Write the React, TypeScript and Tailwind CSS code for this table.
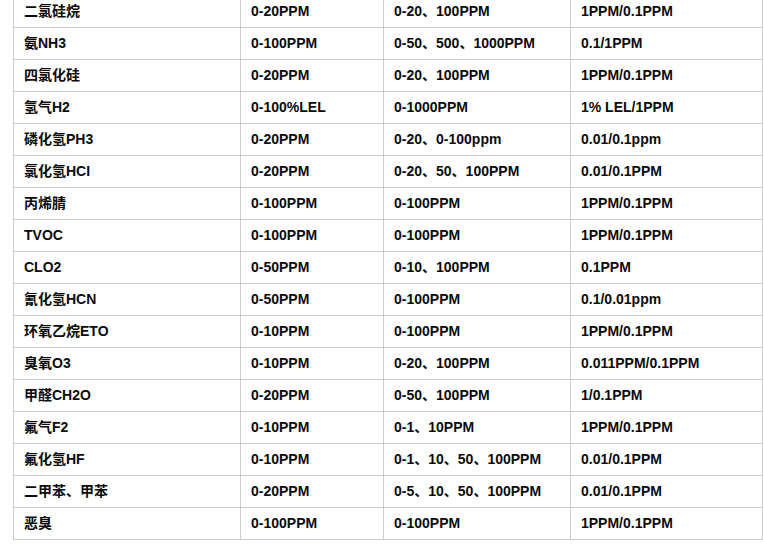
const ROWS: [string, string, string, string][] = [
  ["二氯硅烷", "0-20PPM", "0-20、100PPM", "1PPM/0.1PPM"],
  ["氨NH3", "0-100PPM", "0-50、500、1000PPM", "0.1/1PPM"],
  ["四氯化硅", "0-20PPM", "0-20、100PPM", "1PPM/0.1PPM"],
  ["氢气H2", "0-100%LEL", "0-1000PPM", "1% LEL/1PPM"],
  ["磷化氢PH3", "0-20PPM", "0-20、0-100ppm", "0.01/0.1ppm"],
  ["氯化氢HCI", "0-20PPM", "0-20、50、100PPM", "0.01/0.1PPM"],
  ["丙烯腈", "0-100PPM", "0-100PPM", "1PPM/0.1PPM"],
  ["TVOC", "0-100PPM", "0-100PPM", "1PPM/0.1PPM"],
  ["CLO2", "0-50PPM", "0-10、100PPM", "0.1PPM"],
  ["氰化氢HCN", "0-50PPM", "0-100PPM", "0.1/0.01ppm"],
  ["环氧乙烷ETO", "0-10PPM", "0-100PPM", "1PPM/0.1PPM"],
  ["臭氧O3", "0-10PPM", "0-20、100PPM", "0.011PPM/0.1PPM"],
  ["甲醛CH2O", "0-20PPM", "0-50、100PPM", "1/0.1PPM"],
  ["氟气F2", "0-10PPM", "0-1、10PPM", "1PPM/0.1PPM"],
  ["氟化氢HF", "0-10PPM", "0-1、10、50、100PPM", "0.01/0.1PPM"],
  ["二甲苯、甲苯", "0-20PPM", "0-5、10、50、100PPM", "0.01/0.1PPM"],
  ["恶臭", "0-100PPM", "0-100PPM", "1PPM/0.1PPM"],
];

export default function App() {
  return (
    <div className="h-[559px] w-[763px] overflow-hidden bg-white pl-[13px]">
      <table
        className="mt-[-5px] w-[749px] table-fixed border-collapse text-[14px] font-bold text-[#0a0a0a]"
        style={{ fontFamily: '"Liberation Sans", "Noto Sans CJK SC", sans-serif' }}
      >
        <colgroup>
          <col className="w-[227px]" />
          <col className="w-[143px]" />
          <col className="w-[187px]" />
          <col className="w-[192px]" />
        </colgroup>
        <tbody>
          {ROWS.map((row) => (
            <tr key={row[0]} className="h-[32px]">
              {row.map((cell, i) => (
                <td
                  key={i}
                  className="whitespace-nowrap border border-[#cccccc] px-[10px] pt-0 pb-[2px] align-middle leading-[20px]"
                >
                  {cell}
                </td>
              ))}
            </tr>
          ))}
        </tbody>
      </table>
    </div>
  );
}
